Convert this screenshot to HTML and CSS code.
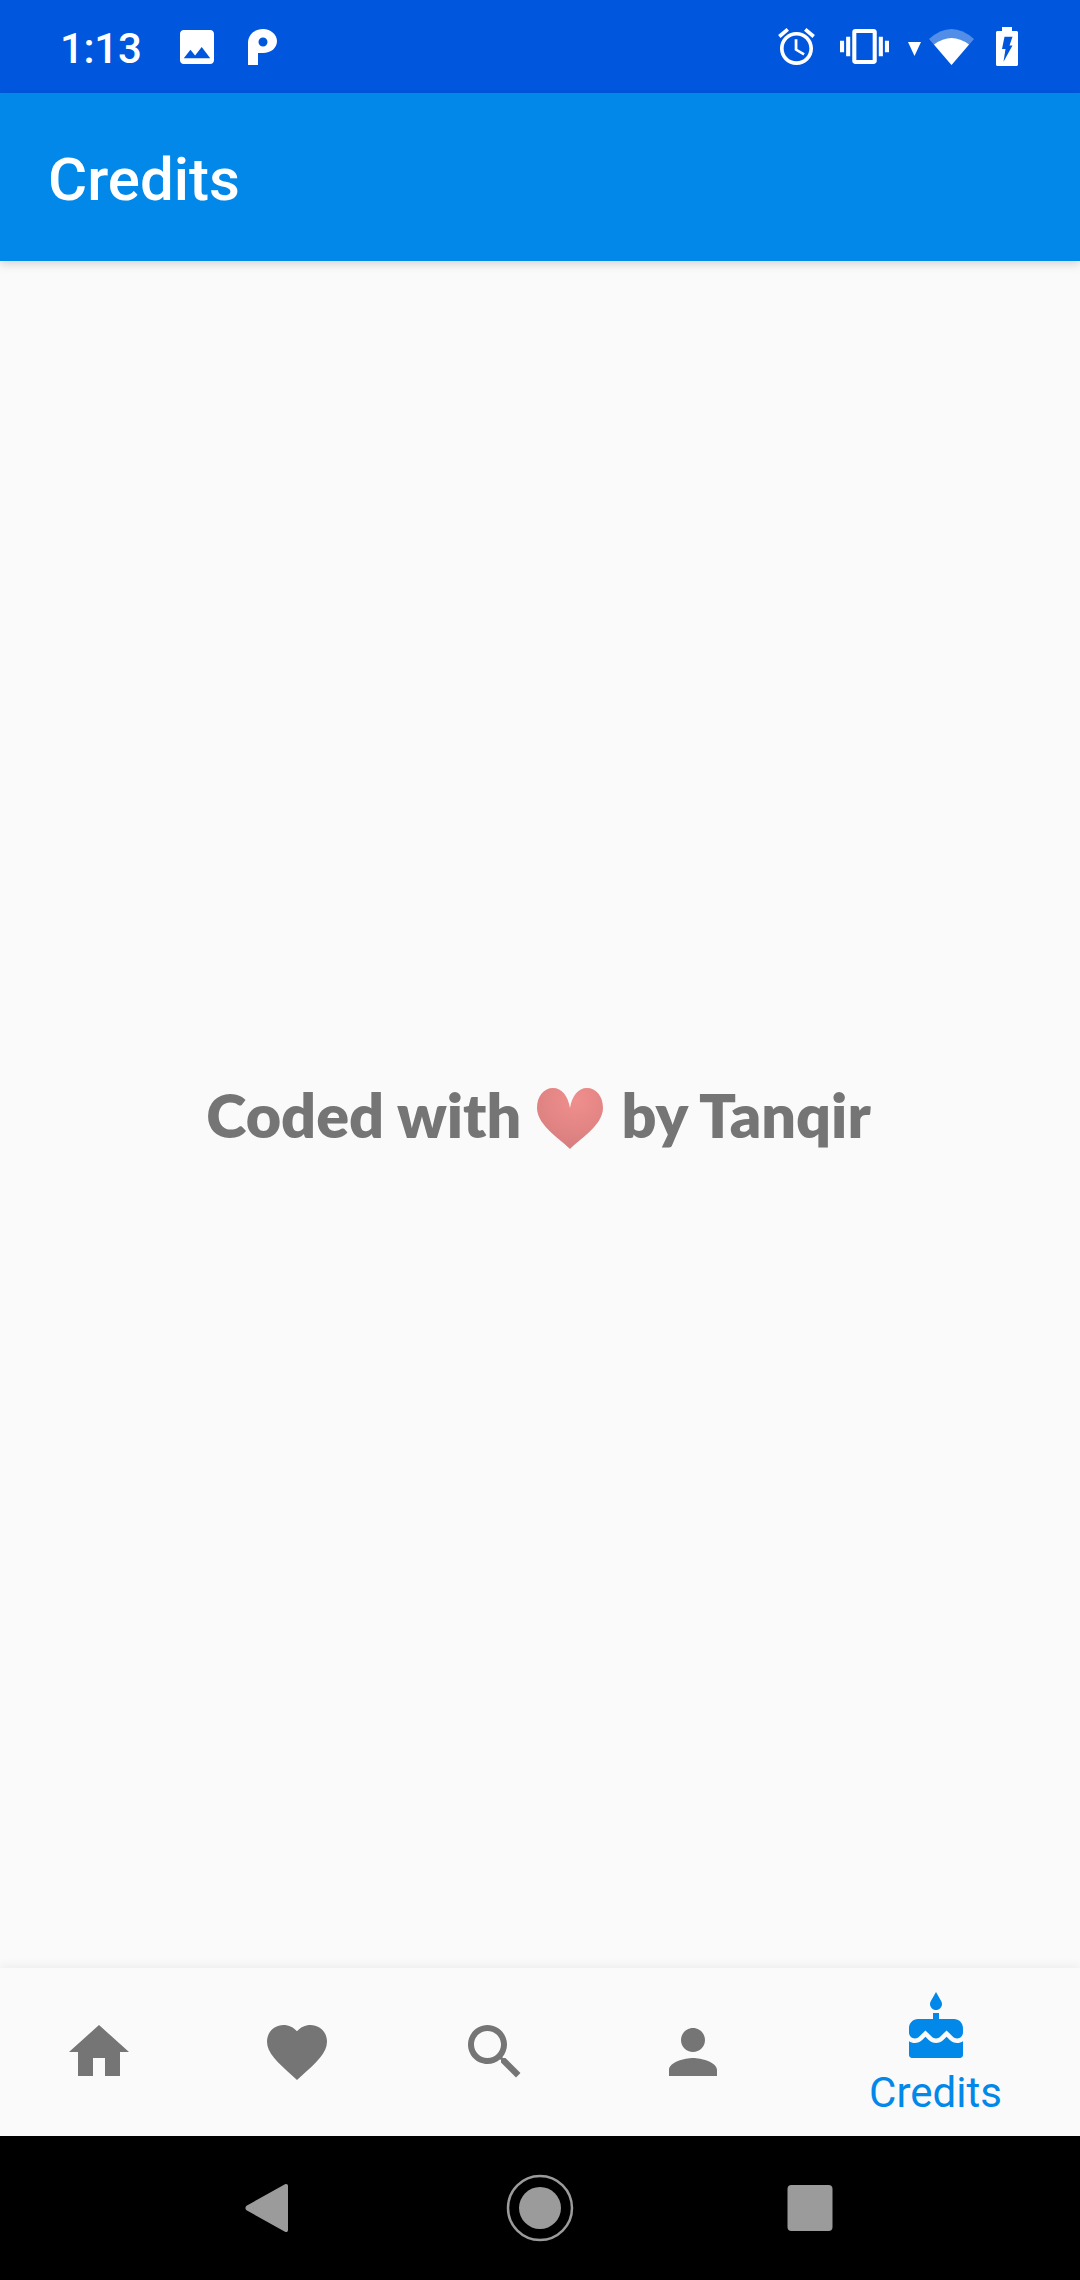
FILE: index.html
```html
<!DOCTYPE html>
<html lang="en">
<head>
<meta charset="utf-8">
<title>Credits</title>
<link rel="stylesheet" href="styles.css">
</head>
<body>
<div class="screen">
  <header class="status-bar">
    <div class="status-left">
      <span class="clock">1:13</span>
      <svg class="ic-image" viewBox="3 3 18 18"><path fill-rule="evenodd" d="M21 19V5c0-1.1-.9-2-2-2H5c-1.1 0-2 .9-2 2v14c0 1.1.9 2 2 2h14c1.100 0 2-.9 2-2zM8.500 13.500l2.500 3.010L14.500 12l4.500 6H5l3.500-4.500z"/></svg>
      <svg class="ic-p" viewBox="0 0 29 36"><path fill-rule="evenodd" d="M0 36V14C0 6 6 0 15 0c8 0 14 6 14 12 0 7-6 12-14 12h-5v12zM15 8.500a4.500 4.500 0 1 0 0 9 4.500 4.500 0 0 0 0-9z"/></svg>
    </div>
    <div class="status-right">
      <svg class="ic-alarm" viewBox="2 1.860 20 20.140"><path d="M22 5.720l-4.600-3.860-1.290 1.530 4.600 3.860L22 5.720zM7.880 3.390L6.600 1.860 2 5.710l1.290 1.530 4.590-3.850zM12.500 8H11v6l4.750 2.850.75-1.230-4-2.370V8zM12 4c-4.970 0-9 4.030-9 9s4.020 9 9 9c4.970 0 9-4.030 9-9s-4.030-9-9-9zm0 16c-3.870 0-7-3.130-7-7s3.130-7 7-7 7 3.130 7 7-3.130 7-7 7z"/></svg>
      <svg class="ic-vibrate" viewBox="0 3 24 18" preserveAspectRatio="none"><path d="M0 15h2V9H0v6zm3 2h2V7H3v10zm19-8v6h2V9h-2zm-3 8h2V7h-2v10zM16.500 3h-9C6.670 3 6 3.670 6 4.500v15c0 .83.67 1.500 1.500 1.500h9c.83 0 1.500-.67 1.500-1.500v-15c0-.83-.67-1.500-1.500-1.500zM16 19H8V5h8v14z"/></svg>
      <svg class="ic-tri" viewBox="0 0 13 14"><path d="M0 0h13L6.500 14z"/></svg>
      <svg class="ic-wifi" viewBox="0 0 45 36"><path opacity=".32" d="M22.500 36L0 10Q22.500-10 45 10z"/><path d="M22.500 36L5 15.500Q22.500 2.500 40 15.500z"/></svg>
      <svg class="ic-battery" viewBox="0 0 22 39"><path fill-rule="evenodd" d="M6 0h10v4h4.500c.8 0 1.500.7 1.500 1.500v32c0 .8-.7 1.500-1.500 1.500h-19C.7 39 0 38.300 0 37.500v-32C0 4.700.7 4 1.500 4H6zM8.500 9.700h8l-3 8.800h3L7.500 34.700l2-12.700H6z"/></svg>
    </div>
  </header>

  <div class="app-bar"><h1 class="app-title">Credits</h1></div>

  <main class="content">
    <p class="message">Coded with <svg class="emoji-heart" viewBox="0 0 66 61"><defs><radialGradient id="heartFill" cx=".58" cy=".2" r=".85"><stop offset="0" stop-color="#f08f8d"/><stop offset=".55" stop-color="#e28584"/><stop offset="1" stop-color="#d67c7f"/></radialGradient></defs><path fill="url(#heartFill)" d="M33 61C26 53 0 38 0 20 0 8 7 0 16 0c9 0 15 8 17 20C35 8 41 0 50 0c9 0 16 8 16 20 0 18-26 33-33 41z"/></svg> by Tanqir</p>
  </main>

  <nav class="bottom-nav">
    <div class="tab">
      <svg class="tab-icon" viewBox="0 0 24 24"><path d="M10 20v-6h4v6h5v-8h3L12 3 2 12h3v8z"/></svg>
    </div>
    <div class="tab">
      <svg class="tab-icon" viewBox="0 0 24 24"><path d="M12 21.350l-1.450-1.320C5.400 15.360 2 12.280 2 8.500 2 5.420 4.420 3 7.500 3c1.740 0 3.410.81 4.500 2.090C13.090 3.810 14.760 3 16.500 3 19.580 3 22 5.420 22 8.500c0 3.780-3.400 6.860-8.550 11.540L12 21.350z"/></svg>
    </div>
    <div class="tab">
      <svg class="tab-icon" viewBox="0 0 24 24"><path d="M15.500 14h-.79l-.28-.27C15.410 12.590 16 11.110 16 9.500 16 5.910 13.090 3 9.500 3S3 5.910 3 9.500 5.910 16 9.500 16c1.610 0 3.090-.59 4.230-1.570l.27.28v.79l5 4.990L20.490 19l-4.990-5zm-6 0C7.010 14 5 11.990 5 9.500S7.010 5 9.500 5 14 7.010 14 9.500 11.990 14 9.500 14z"/></svg>
    </div>
    <div class="tab">
      <svg class="tab-icon" viewBox="0 0 24 24"><path d="M12 12c2.210 0 4-1.790 4-4s-1.790-4-4-4-4 1.790-4 4 1.790 4 4 4zm0 2c-2.670 0-8 1.340-8 4v2h16v-2c0-2.660-5.330-4-8-4z"/></svg>
    </div>
    <div class="tab tab-active">
      <svg class="tab-icon" viewBox="0 0 24 24"><path d="M12 6c1.110 0 2-.9 2-2 0-.38-.1-.73-.29-1.030L12 0l-1.710 2.970c-.19.3-.29.65-.29 1.030 0 1.100.9 2 2 2zm4.600 9.990l-1.070-1.070-1.080 1.070c-1.300 1.300-3.580 1.310-4.890 0l-1.070-1.070-1.090 1.070C6.750 16.640 5.880 17 4.960 17c-.73 0-1.400-.23-1.960-.61V21c0 .55.45 1 1 1h16c.55 0 1-.45 1-1v-4.610c-.56.38-1.230.61-1.960.61-.92 0-1.790-.36-2.440-1.010zM18 9h-5V7h-2v2H6c-1.660 0-3 1.340-3 3v1.540c0 1.080.88 1.960 1.960 1.960.52 0 1.020-.2 1.380-.57l2.140-2.130 2.130 2.130c.74.74 2.030.74 2.770 0l2.140-2.130 2.130 2.130c.37.37.86.57 1.380.57 1.080 0 1.960-.88 1.960-1.960V12C21 10.340 19.660 9 18 9z"/></svg>
      <span class="tab-label">Credits</span>
    </div>
  </nav>

  <footer class="system-nav">
    <svg class="sys-btn" viewBox="0 0 144 72"><path d="M48.500 33.800L87 12.300c1.500-.8 3-.1 3 1.700v44c0 1.800-1.500 2.500-3 1.700L48.500 38.200c-1.400-1-1.400-3.400 0-4.400z"/></svg>
    <svg class="sys-btn sys-home" viewBox="0 0 144 72"><circle class="home-ring" cx="72" cy="36" r="32"/><circle cx="72" cy="36" r="21"/></svg>
    <svg class="sys-btn" viewBox="0 0 144 72"><rect x="49.500" y="13" width="45" height="46" rx="4"/></svg>
  </footer>
</div>
</body>
</html>
```

FILE: styles.css
```css
* {
  box-sizing: border-box;
}

html,
body {
  margin: 0;
  padding: 0;
}

.screen {
  width: 1080px;
  height: 2280px;
  display: flex;
  flex-direction: column;
  background: #fafafa;
  overflow: hidden;
  font-family: Roboto, sans-serif;
}

.status-bar {
  height: 93px;
  flex: none;
  display: flex;
  align-items: center;
  justify-content: space-between;
  padding: 0 62px 0 60px;
  background: #0057de;
  color: #fff;
}

.status-bar svg {
  display: block;
  fill: #fff;
  flex: none;
}

.status-left,
.status-right {
  display: flex;
  align-items: center;
}

.clock {
  font-size: 42px;
  line-height: 49px;
  font-weight: 500;
  width: 120px;
  margin-top: 3px;
  letter-spacing: -0.3px;
}

.ic-image {
  width: 34px;
  height: 34px;
  margin-right: 34px;
}

.ic-p {
  width: 29px;
  height: 36px;
}

.ic-alarm {
  width: 37px;
  height: 37px;
  margin-right: 25px;
}

.ic-vibrate {
  width: 49px;
  height: 35px;
  margin-right: 19px;
}

.ic-tri {
  width: 13px;
  height: 14px;
  margin: 5px 8px 0 0;
}

.ic-wifi {
  width: 45px;
  height: 36px;
  margin-right: 22px;
}

.ic-battery {
  width: 22px;
  height: 39px;
}

.app-bar {
  position: relative;
  height: 168px;
  flex: none;
  display: flex;
  align-items: center;
  padding: 6px 0 0 48px;
  background: #0288e9;
  box-shadow: 0 3px 9px rgba(0, 0, 0, 0.16);
}

.app-title {
  margin: 0;
  font-size: 60px;
  line-height: 70px;
  font-weight: 500;
  color: #fff;
}

.content {
  flex: 1;
  display: flex;
  align-items: center;
  justify-content: center;
}

.message {
  margin: 0;
  padding-right: 3px;
  font-family: Lato, sans-serif;
  font-size: 61px;
  line-height: 72px;
  font-weight: 800;
  color: #757575;
  white-space: nowrap;
}

.emoji-heart {
  display: inline-block;
  width: 66px;
  height: 61px;
  margin: 0 4px 0 2px;
  vertical-align: -11px;
}

.bottom-nav {
  position: relative;
  height: 168px;
  flex: none;
  display: grid;
  grid-template-columns: repeat(4, 198px) 288px;
  background: #fafafa;
  box-shadow: 0 -3px 9px rgba(0, 0, 0, 0.05);
}

.tab {
  display: flex;
  flex-direction: column;
  align-items: center;
  justify-content: center;
}

.tab-active {
  justify-content: flex-start;
  padding-top: 24px;
}

.tab-icon {
  display: block;
  width: 72px;
  height: 72px;
  fill: #757575;
}

.tab-active .tab-icon {
  fill: #0288e9;
}

.tab-label {
  font-size: 42px;
  line-height: 49px;
  color: #0288e9;
  margin: 4px 1px 0 0;
}

.system-nav {
  height: 144px;
  flex: none;
  display: flex;
  align-items: center;
  justify-content: center;
  gap: 126px;
  background: #000;
}

.sys-btn {
  display: block;
  width: 144px;
  height: 72px;
  fill: #9b9b9b;
}

.home-ring {
  fill: none;
  stroke: #9b9b9b;
  stroke-width: 2.5px;
}
```
